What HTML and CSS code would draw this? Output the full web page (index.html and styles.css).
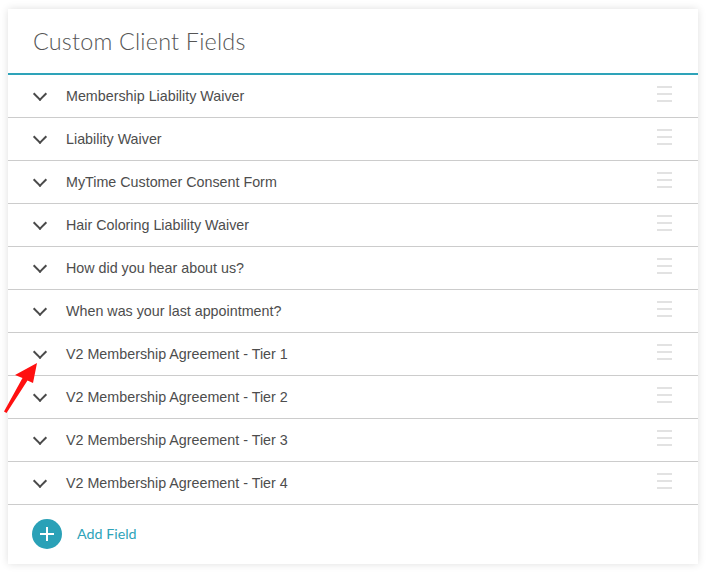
FILE: index.html
```html
<!DOCTYPE html>
<html>
<head>
<meta charset="utf-8">
<link rel="stylesheet" href="styles.css">
</head>
<body>
<div class="page">
  <div class="card">
    <div class="card-header"><h1 class="title">Custom Client Fields</h1></div>
    <ul class="fields">
      <li class="field"><span class="chev"></span><span class="label">Membership Liability Waiver</span><span class="handle"><i></i><i></i><i></i></span></li>
      <li class="field"><span class="chev"></span><span class="label">Liability Waiver</span><span class="handle"><i></i><i></i><i></i></span></li>
      <li class="field"><span class="chev"></span><span class="label">MyTime Customer Consent Form</span><span class="handle"><i></i><i></i><i></i></span></li>
      <li class="field"><span class="chev"></span><span class="label">Hair Coloring Liability Waiver</span><span class="handle"><i></i><i></i><i></i></span></li>
      <li class="field"><span class="chev"></span><span class="label">How did you hear about us?</span><span class="handle"><i></i><i></i><i></i></span></li>
      <li class="field"><span class="chev"></span><span class="label">When was your last appointment?</span><span class="handle"><i></i><i></i><i></i></span></li>
      <li class="field"><span class="chev"></span><span class="label">V2 Membership Agreement - Tier 1</span><span class="handle"><i></i><i></i><i></i></span></li>
      <li class="field"><span class="chev"></span><span class="label">V2 Membership Agreement - Tier 2</span><span class="handle"><i></i><i></i><i></i></span></li>
      <li class="field"><span class="chev"></span><span class="label">V2 Membership Agreement - Tier 3</span><span class="handle"><i></i><i></i><i></i></span></li>
      <li class="field"><span class="chev"></span><span class="label">V2 Membership Agreement - Tier 4</span><span class="handle"><i></i><i></i><i></i></span></li>
    </ul>
    <div class="add-row">
      <span class="add-btn"><svg width="30" height="30" viewBox="0 0 30 30"><circle cx="15" cy="15" r="15" fill="#2aa1b7"/><path d="M15 8v14M8 15h14" stroke="#fff" stroke-width="2"/></svg></span>
      <span class="add-label">Add Field</span>
    </div>
  </div>
  <svg class="arrow" width="45" height="64" viewBox="0 0 45 64"><path d="M37 11 L33 31 L27.5 28.5 L6.5 61 L4 59.5 L22.5 26 L15 23 Z" fill="#ff1010"/></svg>
</div>
</body>
</html>
```
FILE: styles.css
```css
* { box-sizing: border-box; }
body { margin: 0; background: #fff; }
.page { position: relative; padding: 9px 9px 11px 8px; width: 707px; height: 576px; }
.card { width: 690px; background: #fff; box-shadow: 0 0 8px rgba(0,0,0,0.13); }
.card-header { height: 66px; border-bottom: 2px solid #2ea3b9; padding: 0 25px; display: flex; align-items: center; }
.title { margin: 0; font-family: Lato, "Open Sans", sans-serif; font-weight: 300; font-size: 23.4px; color: #555; letter-spacing: 0.2px; padding-bottom: 0; }
.fields { list-style: none; margin: 0; padding: 0; }
.field { height: 43px; border-bottom: 1px solid #ccc; display: flex; align-items: center; padding-left: 25px; padding-right: 26px; }
.chev { width: 12px; height: 12px; margin-right: 21px; position: relative; }
.chev::before { content: ""; position: absolute; left: 2px; top: -1px; width: 8px; height: 8px; border-right: 2px solid #4a4a4a; border-bottom: 2px solid #4a4a4a; transform: rotate(45deg); }
.label { flex: 1; font-family: "Liberation Sans", Arial, sans-serif; font-size: 14.3px; color: #4d4d4d; }
.handle { width: 15px; display: flex; flex-direction: column; gap: 5px; margin-top: -4px; }
.handle i { display: block; height: 2px; background: #e2e2e2; }
.add-row { height: 59px; display: flex; align-items: center; padding-left: 24px; padding-bottom: 2px; }
.add-btn { width: 30px; height: 30px; margin-right: 15px; display: flex; }
.add-label { font-family: Lato, "Open Sans", sans-serif; font-size: 14.3px; color: #2ea3b9; }
.arrow { position: absolute; left: 0; top: 352px; }
```
